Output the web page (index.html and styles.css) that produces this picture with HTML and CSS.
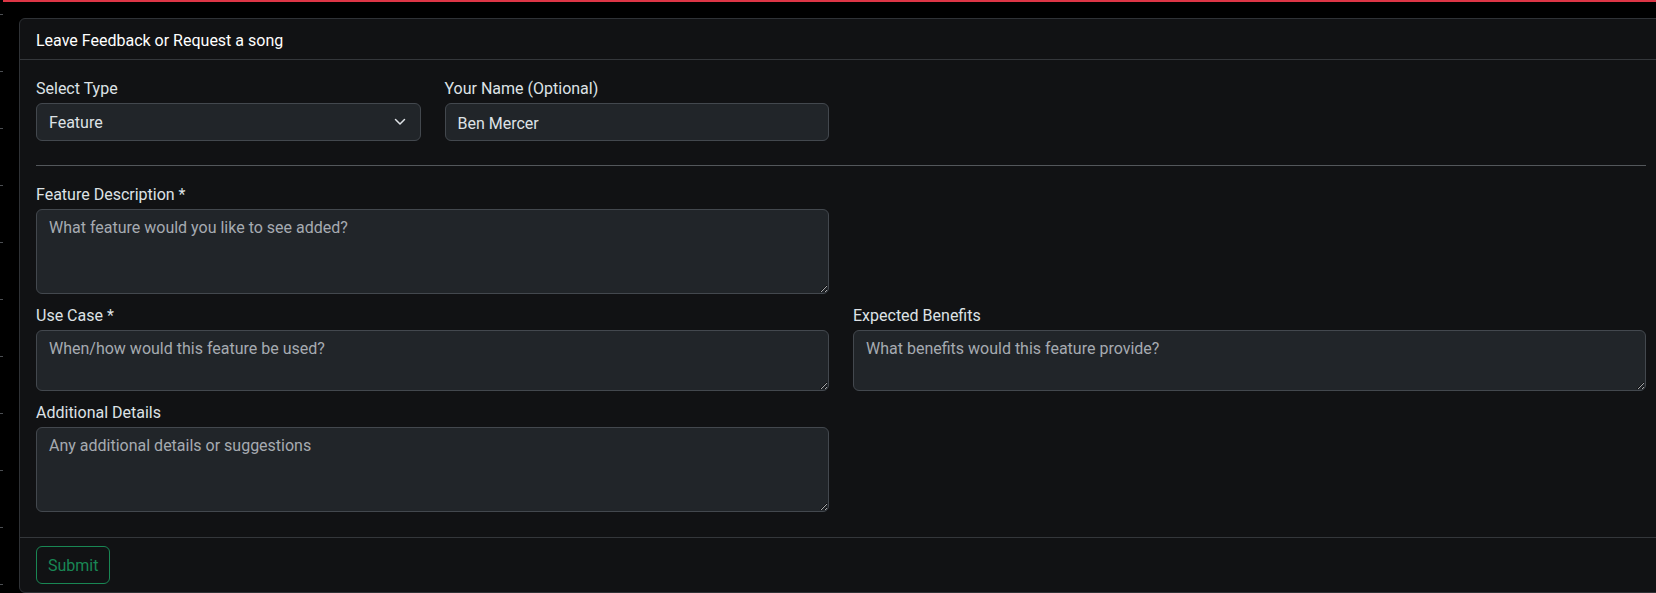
FILE: index.html
```html
<!DOCTYPE html>
<html lang="en">
<head>
<meta charset="utf-8">
<title>Leave Feedback or Request a song</title>
<link rel="stylesheet" href="styles.css">
</head>
<body>
<div class="topbar"></div>
<div class="page">
  <form class="card">
    <div class="card-header">Leave Feedback or Request a song</div>
    <div class="card-body">
      <div class="grid">
        <div class="field">
          <label class="form-label" for="type">Select Type</label>
          <div class="select" id="type">
            <span>Feature</span>
            <svg class="chev" width="16" height="12" viewBox="0 0 16 12" aria-hidden="true"><path d="M3.5 3.5l4.5 4.5 4.5-4.5" fill="none" stroke="#dee2e6" stroke-width="1.5" stroke-linecap="round" stroke-linejoin="round"/></svg>
          </div>
        </div>
        <div class="field">
          <label class="form-label" for="name">Your Name (Optional)</label>
          <input class="form-control" id="name" type="text" value="Ben Mercer">
        </div>
      </div>
      <hr class="divider">
      <div class="grid rows">
        <div class="field half">
          <label class="form-label">Feature Description *</label>
          <textarea class="form-control tall" placeholder="What feature would you like to see added?"></textarea>
        </div>
        <div class="field half newrow">
          <label class="form-label">Use Case *</label>
          <textarea class="form-control short" placeholder="When/how would this feature be used?"></textarea>
        </div>
        <div class="field half">
          <label class="form-label">Expected Benefits</label>
          <textarea class="form-control short" placeholder="What benefits would this feature provide?"></textarea>
        </div>
        <div class="field half newrow">
          <label class="form-label">Additional Details</label>
          <textarea class="form-control tall" placeholder="Any additional details or suggestions"></textarea>
        </div>
      </div>
    </div>
    <div class="card-footer">
      <button type="button" class="btn-outline-success">Submit</button>
    </div>
  </form>
</div>
</body>
</html>
```

FILE: styles.css
```css
html, body {
  margin: 0;
  padding: 0;
  height: 593px;
  overflow: hidden;
}
body {
  background-color: #000;
  background-image: repeating-linear-gradient(to bottom, transparent 0 14px, #4b4e52 14px 15px, transparent 15px 57px);
  background-size: 3px 100%;
  background-repeat: no-repeat;
  font-family: "Segoe UI", Roboto, "Liberation Sans", sans-serif;
  font-size: 16px;
  line-height: 24px;
  color: #dee2e6;
}
.topbar {
  height: 2px;
  margin-left: 3px;
  background: #dc3545;
}
.page {
  padding: 16px 0 0 19px;
}
.card {
  width: 1644px;
  box-sizing: border-box;
  background: #111214;
  border: 1px solid #2f3236;
  border-radius: 6px;
  display: flex;
  flex-direction: column;
  margin: 0;
}
.card-header {
  padding: 10px 16px 6px;
  color: #fff;
  border-bottom: 1px solid #34373b;
}
.card-body {
  padding: 16px;
}
.grid {
  display: grid;
  grid-template-columns: repeat(4, 1fr);
  column-gap: 24px;
}
.grid.rows {
  row-gap: 9px;
  margin-bottom: 9px;
}
.field {
  display: flex;
  flex-direction: column;
  min-width: 0;
}
.half {
  grid-column: span 2;
}
.newrow {
  grid-column: 1 / span 2;
}
.form-label {
  display: block;
  padding-top: 1px;
  margin-bottom: 2px;
  color: #dee2e6;
}
.form-control, .select {
  box-sizing: border-box;
  width: 100%;
  background: #212529;
  border: 1px solid #43484e;
  border-radius: 6px;
  color: #dee2e6;
  font: inherit;
  padding: 6px 12px;
  margin: 0;
}
input.form-control, .select {
  height: 38px;
}
input.form-control {
  padding-top: 7px;
  padding-bottom: 5px;
}
.select {
  display: flex;
  align-items: center;
  justify-content: space-between;
  padding-right: 12px;
}
.select span {
  padding-top: 2px;
}
.chev {
  display: block;
}
textarea.form-control {
  resize: vertical;
  display: block;
  padding-top: 6px;
}
textarea.form-control::placeholder {
  color: #a6abb1;
  opacity: 1;
}
.tall { height: 85px; }
.short { height: 61px; }
.divider {
  border: 0;
  border-top: 1px solid #53575b;
  margin: 24px 0 16px;
}
.card-footer {
  padding: 8px 16px;
  border-top: 1px solid #34373b;
}
.btn-outline-success {
  font: inherit;
  color: #198754;
  background: transparent;
  border: 1px solid #198754;
  border-radius: 6px;
  padding: 7px 11px 5px;
  height: 38px;
  display: block;
}
```
